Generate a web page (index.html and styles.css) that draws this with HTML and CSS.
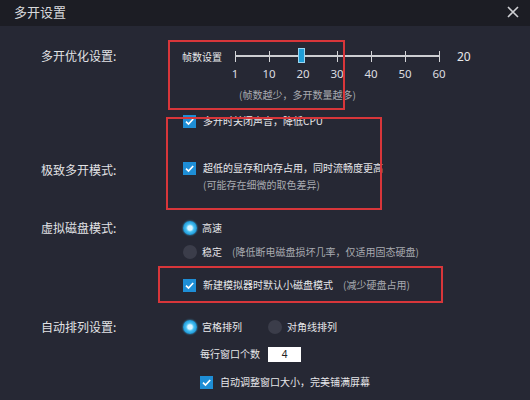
FILE: index.html
```html
<!DOCTYPE html>
<html lang="zh-CN">
<head>
<meta charset="utf-8">
<title>多开设置</title>
<link rel="stylesheet" href="styles.css">
</head>
<body>
<div class="window">
  <div class="titlebar">
    <span class="title">多开设置</span>
    <svg class="close" width="12" height="12" viewBox="0 0 12 12"><path d="M1 1 L11 11 M11 1 L1 11" stroke="#cfd0d4" stroke-width="1.6" fill="none"/></svg>
  </div>
  <div class="content">
    <section class="sec s1">
      <div class="label l-tall">多开优化设置:</div>
      <div class="controls">
        <div class="slider-row">
          <span class="stxt">帧数设置</span>
          <div class="slider">
            <div class="ticks"><i></i><i></i><i></i><i></i><i></i><i></i><i></i></div>
            <div class="thumb"></div>
          </div>
          <span class="val">20</span>
        </div>
        <div class="tick-labels"><span>1</span><span>10</span><span>20</span><span>30</span><span>40</span><span>50</span><span>60</span></div>
        <div class="line hint-line"><span class="hint">(帧数越少，多开数量越多)</span></div>
        <div class="line cb1"><span class="cb"></span><span>多开时关闭声音，降低CPU</span></div>
      </div>
    </section>
    <section class="sec s2">
      <div class="label l-s2">极致多开模式:</div>
      <div class="controls">
        <div class="line"><span class="cb"></span><span>超低的显存和内存占用，同时流畅度更高</span></div>
        <div class="line sub"><span class="hint">(可能存在细微的取色差异)</span></div>
      </div>
    </section>
    <section class="sec s3">
      <div class="label">虚拟磁盘模式:</div>
      <div class="controls">
        <div class="line"><span class="radio on"></span><span>高速</span></div>
        <div class="line r2"><span class="radio"></span><span>稳定</span><span class="hint gap">(降低断电磁盘损坏几率，仅适用固态硬盘)</span></div>
        <div class="line cb3"><span class="cb"></span><span>新建模拟器时默认小磁盘模式</span><span class="hint gap">(减少硬盘占用)</span></div>
      </div>
    </section>
    <section class="sec s4">
      <div class="label">自动排列设置:</div>
      <div class="controls">
        <div class="line"><span class="radio on"></span><span class="opt1">宫格排列</span><span class="radio"></span><span>对角线排列</span></div>
        <div class="line indent r-input"><span>每行窗口个数</span><span class="num">4</span></div>
        <div class="line indent cb4"><span class="cb"></span><span>自动调整窗口大小，完美铺满屏幕</span></div>
      </div>
    </section>
  </div>
  <div class="mark m1"></div>
  <div class="mark m2"></div>
  <div class="mark m3"></div>
</div>
</body>
</html>
```
FILE: styles.css
```css
html, body {
  margin: 0;
  padding: 0;
}
body {
  width: 530px;
  height: 400px;
  overflow: hidden;
  background: #262834;
  font-family: "Noto Sans CJK SC", "Noto Sans", sans-serif;
  color: #e6e7ea;
}
.window {
  position: relative;
  width: 530px;
  height: 400px;
}
.titlebar {
  height: 26px;
  background: #1c1d24;
  display: flex;
  align-items: center;
  justify-content: space-between;
  padding: 0 11px 0 14px;
}
.title {
  font-size: 13px;
  color: #d8d9dc;
  line-height: 26px;
  margin-top: -2px;
}
.close {
  margin-top: -2px;
}
.content {
  display: flex;
  flex-direction: column;
}
.sec {
  display: flex;
  align-items: flex-start;
}
.label {
  width: 183px;
  box-sizing: border-box;
  padding-left: 41px;
  font-size: 12px;
  line-height: 16px;
  height: 16px;
  color: #e2e3e6;
  white-space: nowrap;
}
.controls {
  display: flex;
  flex-direction: column;
  font-size: 10px;
}
.line {
  height: 16px;
  display: flex;
  align-items: center;
  white-space: nowrap;
  line-height: 16px;
}
.hint {
  color: #a8aab0;
}
.gap {
  margin-left: 10px;
}

/* section 1 */
.s1 {
  padding-top: 18px;
}
.l-tall {
  height: 24px;
  line-height: 24px;
}
.slider-row {
  height: 24px;
  display: flex;
  align-items: center;
}
.stxt {
  margin-left: -1px;
  width: 40px;
  font-size: 10px;
}
.slider {
  position: relative;
  width: 205px;
  height: 24px;
  margin-left: 13px;
}
.slider::before {
  content: "";
  position: absolute;
  left: 0;
  right: 0;
  top: 11px;
  height: 2px;
  background: #cdced2;
}
.ticks {
  display: flex;
  justify-content: space-between;
  height: 11px;
  margin-top: 7px;
}
.ticks i {
  display: block;
  width: 1px;
  height: 11px;
  background: #d4d5d8;
}
.thumb {
  position: absolute;
  left: 63px;
  top: 4px;
  width: 5px;
  height: 13px;
  background: #1f9ed8;
  border: 1px solid #9ad6f1;
}
.val {
  margin-left: 17px;
  font-size: 12px;
  font-family: "Noto Sans", sans-serif;
}
.tick-labels {
  display: grid;
  grid-template-columns: repeat(7, 34px);
  margin-left: 35px;
  height: 12px;
  line-height: 12px;
  font-size: 11.5px;
  font-family: "Noto Sans", sans-serif;
  text-align: center;
  color: #dcdde0;
}
.hint-line {
  margin-top: 7px;
  margin-left: 56px;
}
.cb1 {
  margin-top: 10px;
}
.cb {
  width: 13px;
  height: 13px;
  background: #1e8ed6;
  margin-right: 7px;
  flex: none;
  background-image: url("data:image/svg+xml;utf8,<svg xmlns='http://www.w3.org/2000/svg' viewBox='0 0 13 13'><path d='M3 6.6 L5.5 9 L10.2 4' stroke='white' stroke-width='1.7' fill='none'/></svg>");
  background-size: 13px 13px;
}
.radio {
  width: 14px;
  height: 14px;
  border-radius: 50%;
  background: #3b3d4a;
  margin-right: 5px;
  flex: none;
}
.radio.on {
  background: radial-gradient(circle, #d6f3ff 0 22%, #47c0f2 40%, #1c98d8 70%, #2a86c0 100%);
  box-shadow: 0 0 2px #3fb4ea;
}

/* section 2 */
.s2 {
  margin-top: 31px;
}
.l-s2 {
  margin-top: 2px;
}
.sub {
  margin-top: 1px;
  padding-left: 20px;
}

/* section 3 */
.s3 {
  margin-top: 27px;
}
.r2 {
  margin-top: 8px;
}
.cb3 {
  margin-top: 17px;
}

/* section 4 */
.s4 {
  margin-top: 26px;
}
.opt1 {
  margin-right: 26px;
}
.indent {
  padding-left: 17px;
}
.r-input {
  margin-top: 11px;
}
.num {
  margin-left: 8px;
  width: 33px;
  height: 15px;
  background: #ffffff;
  color: #222;
  text-align: center;
  line-height: 15px;
  font-size: 10px;
  font-family: "Noto Sans", sans-serif;
}
.cb4 {
  margin-top: 12px;
}

/* red annotation boxes */
.mark {
  position: absolute;
  border: 2px solid #d8363a;
  box-sizing: border-box;
  pointer-events: none;
}
.m1 {
  left: 168px;
  top: 40px;
  width: 177px;
  height: 70px;
}
.m2 {
  left: 166px;
  top: 117px;
  width: 216px;
  height: 93px;
}
.m3 {
  left: 158px;
  top: 266px;
  width: 285px;
  height: 37px;
}
```
